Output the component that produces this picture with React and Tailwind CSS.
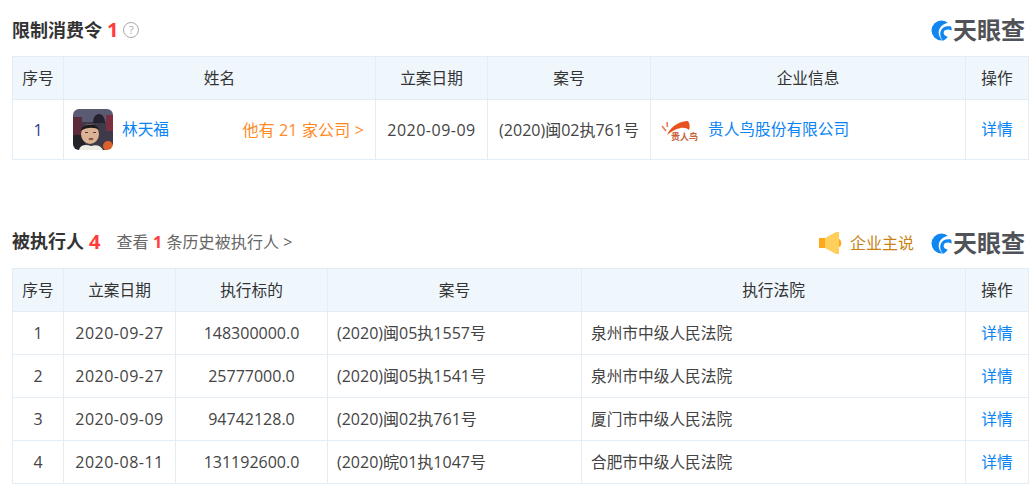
const font = { fontFamily: '"Open Sans", "Noto Sans CJK SC", sans-serif' };

const LINK = "text-[#0a84f5]";

function Logo() {
  return (
    <div className="flex items-center mr-[3px]">
      <svg width="21" height="21" viewBox="0 0 21 21" className="mr-[1px]">
        <circle cx="10.5" cy="10.5" r="10" fill="#0f86f0" />
        <path d="M21 3 C15 2 10 5 8 10 C7 14 8.5 18 12 21 L21 21 Z" fill="#fff" />
        <path d="M9.5 11.5 C11 7 15 5.5 20 6.5 C20.6 8 20.8 9 20.6 10.5 C17.5 8.8 14 9 12.8 11.8 C12 14 13.5 16 16.8 16.8 C15.2 19 13.5 20.2 12 20.7 C9.5 18 8.7 14.5 9.5 11.5 Z" fill="#0f86f0" />
      </svg>
      <span className="w-[72px] text-[24px] leading-[24px] font-bold text-[#4f5257] whitespace-nowrap">天眼查</span>
    </div>
  );
}

function Avatar() {
  return (
    <div className="w-[40px] h-[41px] rounded-[6px] overflow-hidden shrink-0">
      <svg width="40" height="41" viewBox="0 0 40 41" className="blur-[0.7px]">
        <rect width="40" height="41" fill="#3e3a4a" />
        <rect x="0" y="0" width="40" height="13" fill="#5a5a72" />
        <path d="M20 14 C20 2 32 2 32 14 Z" fill="#23222e" />
        <rect x="0" y="8" width="9" height="18" fill="#5c2a3a" />
        <rect x="33" y="6" width="7" height="16" fill="#7a3040" />
        <rect x="0" y="26" width="12" height="15" fill="#26222a" />
        <ellipse cx="17" cy="25" rx="9" ry="10" fill="#dcb394" />
        <path d="M8 22 C8 14 25 13 26 21 C22 18 13 18 8 22 Z" fill="#1d1a1c" />
        <rect x="12" y="23" width="3" height="1" fill="#5a3a30" />
        <rect x="20" y="23" width="3" height="1" fill="#5a3a30" />
        <ellipse cx="18" cy="30" rx="2.5" ry="1.2" fill="#8a5a4a" />
        <path d="M6 41 C7 36 12 35 18 37 C24 35 28 37 30 41 Z" fill="#f0ece6" />
        <circle cx="35" cy="37" r="5" fill="#d9622a" />
      </svg>
    </div>
  );
}

function CompanyLogo() {
  return (
    <div className="w-[40px] h-[40px] shrink-0 relative">
      <svg width="38" height="22" viewBox="0 0 38 22" className="absolute left-0 top-[7px] blur-[0.4px]">
        <path d="M7 18 C11 9 20 4 28 4 C30 7 30 10 29 13 C25 9 17 10 7 18 Z" fill="#e8521f" />
        <path d="M2 9 L6 14 M7 5 L7.5 10" stroke="#ea7a55" strokeWidth="1.6" fill="none" />
      </svg>
      <span className="absolute left-[11px] top-[22px] text-[9px] leading-[10px] font-bold whitespace-nowrap text-[#c9603a]">贵人鸟</span>
    </div>
  );
}

function Volume() {
  return (
    <svg width="24" height="24" viewBox="0 0 24 24">
      <rect x="0" y="7" width="6" height="10" fill="#ffa81c" />
      <path d="M6 7 L17 1 L20 1 L20 23 L17 23 L6 17 Z" fill="#ffcf5c" />
      <path d="M20 8 C23 9 23 15 20 16 Z" fill="#ffa81c" />
    </svg>
  );
}

const th = "border border-[#e4edf6] bg-[#eff6fc] font-normal text-center text-[#333] text-[15.7px] pt-[1px] px-0 pb-0";
const td = "border border-[#e4edf6] p-0";
const cjk = "text-[15.7px]";
const date = "tracking-[0.5px]";

const rows = [
  ["1", "2020-09-27", "148300000.0", "(2020)闽05执1557号", "泉州市中级人民法院"],
  ["2", "2020-09-27", "25777000.0", "(2020)闽05执1541号", "泉州市中级人民法院"],
  ["3", "2020-09-09", "94742128.0", "(2020)闽02执761号", "厦门市中级人民法院"],
  ["4", "2020-08-11", "131192600.0", "(2020)皖01执1047号", "合肥市中级人民法院"],
];

export default function App() {
  return (
    <div className="w-[1032px] h-[488px] bg-white overflow-hidden pl-3 pr-1 text-[16px] text-[#444]" style={font}>
      <div className="h-[56px] flex items-center justify-between pt-[4px]">
        <div className="flex items-center">
          <span className="text-[18px] font-bold text-[#333]">限制消费令</span>
          <span className="ml-[5px] text-[20px] leading-[24px] font-bold text-[#ff3b3b]">1</span>
          <span className="ml-[5px] w-[16px] h-[16px] rounded-full border border-[#aaa] text-[#aaa] text-[11px] leading-[14px] text-center">?</span>
        </div>
        <Logo />
      </div>
      <table className="table-fixed border-collapse w-[1016px]">
        <colgroup>
          <col className="w-[51px]" />
          <col className="w-[312px]" />
          <col className="w-[112px]" />
          <col className="w-[163px]" />
          <col className="w-[315px]" />
          <col className="w-[63px]" />
        </colgroup>
        <thead>
          <tr className="h-[43px]">
            <th className={th}>序号</th>
            <th className={th}>姓名</th>
            <th className={th}>立案日期</th>
            <th className={th}>案号</th>
            <th className={th}>企业信息</th>
            <th className={th}>操作</th>
          </tr>
        </thead>
        <tbody>
          <tr className="h-[60px]">
            <td className={`${td} text-center text-[#2f3a8a]`}>1</td>
            <td className={td}>
              <div className="flex items-center pl-[9px] pr-[11px]">
                <Avatar />
                <span className={`ml-[9px] ${cjk} ${LINK}`}>林天福</span>
                <span className="ml-auto tracking-[0.15px] text-[#ff8a1f]">他有 21 家公司 &gt;</span>
              </div>
            </td>
            <td className={`${td} ${date} text-center`}>2020-09-09</td>
            <td className={`${td} text-center`}>(2020)闽02执761号</td>
            <td className={td}>
              <div className="flex items-center pl-[9px]">
                <CompanyLogo />
                <span className={`ml-[8px] ${cjk} ${LINK}`}>贵人鸟股份有限公司</span>
              </div>
            </td>
            <td className={`${td} ${cjk} text-center ${LINK}`}>详情</td>
          </tr>
        </tbody>
      </table>

      <div className="h-[108px] flex items-end justify-between pb-[13px]">
        <div className="flex items-center">
          <span className="text-[18px] font-bold text-[#333]">被执行人</span>
          <span className="ml-[5px] text-[20px] leading-[24px] font-bold text-[#ff3b3b]">4</span>
          <span className="ml-[16px] tracking-[0.1px] text-[#666]">
            查看 <b className="text-[#ff3b3b]">1</b> 条历史被执行人 &gt;
          </span>
        </div>
        <div className="flex items-center">
          <Volume />
          <span className="ml-[7px] mr-[17px] text-[#c98212]">企业主说</span>
          <Logo />
        </div>
      </div>
      <table className="table-fixed border-collapse w-[1016px]">
        <colgroup>
          <col className="w-[51px]" />
          <col className="w-[112px]" />
          <col className="w-[152px]" />
          <col className="w-[254px]" />
          <col className="w-[384px]" />
          <col className="w-[63px]" />
        </colgroup>
        <thead>
          <tr className="h-[43px]">
            <th className={th}>序号</th>
            <th className={th}>立案日期</th>
            <th className={th}>执行标的</th>
            <th className={th}>案号</th>
            <th className={th}>执行法院</th>
            <th className={th}>操作</th>
          </tr>
        </thead>
        <tbody>
          {rows.map((r) => (
            <tr key={r[0]} className="h-[43px]">
              <td className={`${td} text-center`}>{r[0]}</td>
              <td className={`${td} ${date} text-center`}>{r[1]}</td>
              <td className={`${td} text-center`}>{r[2]}</td>
              <td className={`${td} pl-[9px]`}>{r[3]}</td>
              <td className={`${td} ${cjk} pl-[9px] pt-[1px]`}>{r[4]}</td>
              <td className={`${td} ${cjk} text-center pt-[1px] ${LINK}`}>详情</td>
            </tr>
          ))}
        </tbody>
      </table>
    </div>
  );
}
